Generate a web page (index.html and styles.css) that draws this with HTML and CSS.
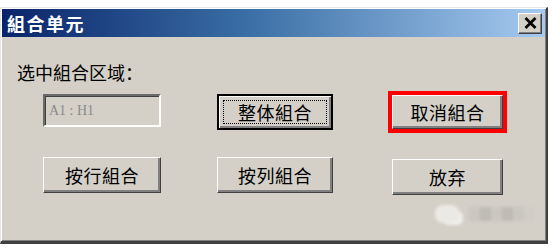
FILE: index.html
```html
<!DOCTYPE html>
<html lang="zh">
<head>
<meta charset="utf-8">
<title>組合单元</title>
<link rel="stylesheet" href="styles.css">
</head>
<body>
<div class="dialog">
  <div class="titlebar">
    <span class="title">組合单元</span>
    <span class="close"><svg width="13" height="12" viewBox="0 0 13 12"><path d="M1.5 1 L11.5 11 M11.5 1 L1.5 11" stroke="#000" stroke-width="2.7" fill="none"/></svg></span>
  </div>
  <div class="content">
    <div class="label">选中組合区域：</div>
    <div class="grid">
      <div class="input">A1 : H1</div>
      <button class="btn default">整体組合</button>
      <button class="btn marked">取消組合</button>
      <button class="btn">按行組合</button>
      <button class="btn">按列組合</button>
      <button class="btn low">放弃</button>
    </div>
  </div>
  <div class="watermark">
    <span class="wm-icon"></span>
    <span class="wm-text"><i></i><i class="d"></i><i></i><i class="d"></i><i></i><i class="l"></i></span>
  </div>
</div>
</body>
</html>
```

FILE: styles.css
```css
html, body {
  margin: 0;
  padding: 0;
  background: #ffffff;
}

body {
  width: 553px;
  height: 251px;
  overflow: hidden;
  font-family: "Noto Sans CJK SC", "Noto Sans", sans-serif;
  color: #000;
}

.dialog {
  position: relative;
  margin-top: 7px;
  width: 548px;
  height: 237px;
  box-sizing: border-box;
  background: #d4d0c8;
  border-style: solid;
  border-width: 1px 2px 3px 1px;
  border-color: #e8e6e2 #404040 #404040 #e8e6e2;
  box-shadow: inset 1px 1px #ffffff, inset -1px -1px #808080;
  padding: 1px;
}

.titlebar {
  height: 28px;
  display: flex;
  align-items: center;
  justify-content: space-between;
  background: linear-gradient(to right, #0a246a 0%, #3a6ea5 45%, #a6caf0 100%);
  padding: 0 3px 0 5px;
}

.title {
  color: #fff;
  font-weight: bold;
  font-size: 18px;
  line-height: 22px;
  letter-spacing: 1.5px;
}

.close {
  width: 24px;
  height: 21px;
  box-sizing: border-box;
  display: flex;
  align-items: center;
  justify-content: center;
  background: #d4d0c8;
  border: 1px solid;
  border-color: #ffffff #404040 #404040 #ffffff;
  box-shadow: inset -1px -1px #808080;
}

.content {
  padding: 24px 0 0 15px;
}

.label {
  font-size: 18px;
  line-height: 22px;
  height: 22px;
}

.grid {
  margin: 11px 0 0 26px;
  display: grid;
  grid-template-columns: 118px 116px 114px;
  grid-template-rows: 36px 36px;
  column-gap: 56px;
  row-gap: 27px;
}

.grid > :nth-child(3) { margin-left: 3px; }
.grid > :nth-child(6) { margin-left: 3px; }

.input {
  height: 33px;
  box-sizing: border-box;
  border: 2px solid;
  border-color: #6a6a6a #ffffff #ffffff #6a6a6a;
  box-shadow: inset 1px 1px #404040, inset -1px -1px #d4d0c8;
  background: #d4d0c8;
  color: #8a8a8a;
  font-family: "Liberation Serif", serif;
  font-size: 14px;
  line-height: 29px;
  padding-left: 4px;
}

.btn {
  display: flex;
  align-items: center;
  justify-content: center;
  margin: 0;
  padding: 0;
  height: 36px;
  box-sizing: border-box;
  background: #d4d0c8;
  border: 1px solid;
  border-color: #ffffff #404040 #404040 #ffffff;
  box-shadow: inset -2px -2px #808080;
  font-family: "Noto Sans CJK SC", "Noto Sans", sans-serif;
  font-size: 18px;
  color: #000;
  letter-spacing: 0.5px;
}

.btn.default {
  border: 2px solid #000;
  box-shadow: inset 1px 1px #ffffff, inset -2px -2px #808080;
  outline: 1px dotted #000;
  outline-offset: -7px;
}

.btn.marked {
  height: 34px;
  margin-top: 1px;
  outline: 4px solid #ff0000;
  outline-offset: 0;
}

.btn.low {
  margin-top: 2px;
}

.watermark {
  position: absolute;
  left: 434px;
  top: 197px;
  display: flex;
  align-items: center;
  gap: 10px;
  filter: blur(1.5px);
  opacity: 0.9;
}

.wm-icon {
  width: 24px;
  height: 18px;
  border-radius: 8px;
  background: #eeece9;
  box-shadow: 6px 4px 0 -2px #f4f3f1;
}

.wm-text {
  display: flex;
}

.wm-text i {
  width: 11px;
  height: 14px;
  background: #c9c6c0;
}

.wm-text i.d { background: #bdb9b3; }
.wm-text i.l { background: #d0cdc7; }
```
